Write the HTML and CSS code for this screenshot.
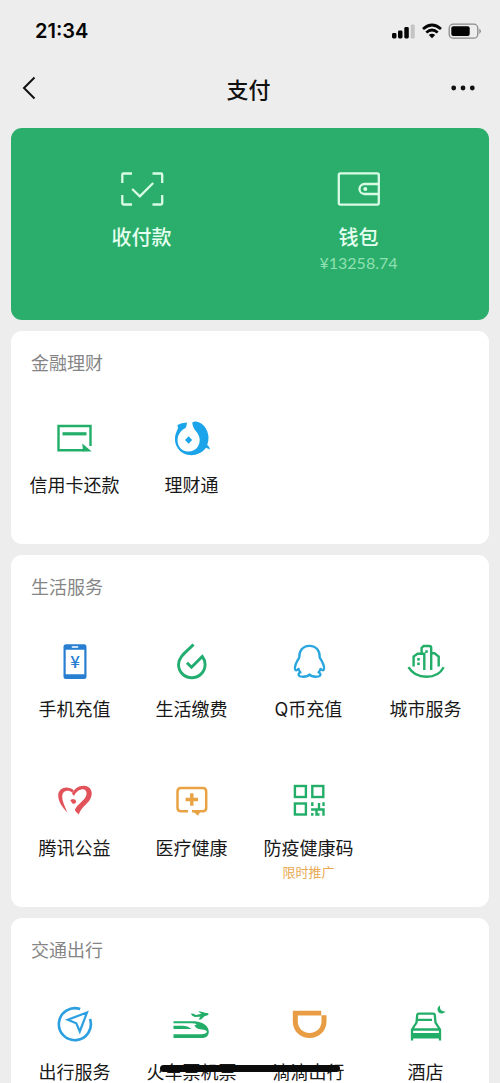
FILE: index.html
```html
<!DOCTYPE html>
<html lang="zh-CN">
<head>
<meta charset="utf-8">
<meta name="viewport" content="width=device-width, initial-scale=1">
<title>支付</title>
<link rel="stylesheet" href="styles.css">
</head>
<body>
<div class="app">
  <div class="status-bar">
    <span class="time">21:34</span>
    <svg class="status-icons" width="90" height="18" viewBox="0 0 90 18">
      <g fill="#050505">
        <rect x="0" y="11" width="4.500" height="5.500" rx="1.400"/>
        <rect x="6" y="8.500" width="4.500" height="8" rx="1.400"/>
        <rect x="12.300" y="5" width="4.500" height="11.500" rx="1.400"/>
      </g>
      <rect x="18.700" y="2.500" width="4" height="14" rx="1.200" fill="#c4c4c4"/>
      <g fill="none" stroke="#050505" stroke-width="2.700">
        <path d="M31 7Q40 -1 49 7"/>
        <path d="M34.300 10.500Q40 5.500 45.700 10.500"/>
      </g>
      <path d="M36.800 13Q40 10.500 43.200 13L40 16.300Z" fill="#050505"/>
      <rect x="57.200" y="2.200" width="28.600" height="14" rx="4" fill="none" stroke="#8b8b8b" stroke-width="1.300"/>
      <rect x="59.300" y="4.300" width="18.400" height="9.800" rx="2" fill="#050505"/>
      <path d="M87.300 6.500Q90.500 9.200 87.300 11.900Z" fill="#8b8b8b"/>
    </svg>
  </div>

  <header class="nav">
    <button class="nav-button" type="button" aria-label="返回">
      <svg width="14" height="24" viewBox="0 0 14 24" fill="none" stroke="#111" stroke-width="2"><path d="M12.500 1.500L2 12L12.500 22.500"/></svg>
    </button>
    <h1 class="nav-title">支付</h1>
    <button class="nav-button nav-more" type="button" aria-label="更多">
      <svg width="24" height="6" viewBox="0 0 24 6" fill="#111"><circle cx="2.700" cy="3" r="2.400"/><circle cx="12" cy="3" r="2.400"/><circle cx="21.300" cy="3" r="2.400"/></svg>
    </button>
  </header>

  <main class="content">
    <section class="wallet-card">
      <a class="wallet-item" href="#pay">
        <svg width="48" height="40" viewBox="0 0 48 40" fill="none" stroke="#d9fbe6" stroke-width="2.300">
          <path d="M14 4.500H5.500Q4.300 4.500 4.300 5.700V14M34.500 4.500H43Q44.200 4.500 44.200 5.700V14M4.300 26V34.300Q4.300 35.500 5.500 35.500H14M44.200 26V34.300Q44.200 35.500 43 35.500H34.500M14.200 20L21.800 27.300L35.200 14"/>
        </svg>
        <span class="wallet-label">收付款</span>
      </a>
      <a class="wallet-item" href="#wallet">
        <svg width="48" height="40" viewBox="0 0 48 40" fill="none" stroke="#d9fbe6" stroke-width="2.300">
          <rect x="3.800" y="4.400" width="40" height="31.200" rx="1.500"/>
          <path d="M43.800 15H29.500A5 5 0 0 0 29.500 25H43.800"/>
          <circle cx="30.300" cy="20" r="2" fill="#d9fbe6" stroke="none"/>
        </svg>
        <span class="wallet-label">钱包</span>
        <span class="amount">¥13258.74</span>
      </a>
    </section>

    <section class="card">
      <h2 class="card-title">金融理财</h2>
      <div class="grid">
        <a class="item" href="#credit">
          <svg class="icon" viewBox="0 0 40 40">
            <path d="M35.500 28V8H3.500V32.300H29" fill="none" stroke="#22ae68" stroke-width="2.400"/>
            <path d="M7.500 15.800H31.500" stroke="#22ae68" stroke-width="3.200"/>
            <path d="M27.300 25.600L36.700 33.500H28Z" fill="#22ae68"/>
          </svg>
          <span>信用卡还款</span>
        </a>
        <a class="item" href="#licaitong">
          <svg class="icon" viewBox="0 0 40 40" fill="#1ba4e9">
            <path d="M5.500 7Q9 5 15 4.600Q14.800 8 13.500 10C6 13.500 3.800 22 7 28.300C10.500 35 21.500 35.500 26 28.500Q29.500 22 26 16C24 12.500 20.500 10.500 20.300 4.500Q22 3.300 24 3.500C31 4.500 36 11.500 36.500 19Q36.700 23 35.200 27Q37.500 28.200 38 31.500L34 29.800C27 39.500 12 39.600 6 30.500C2 25 2.300 18 5 12.500Q6.700 10 5.500 7Z"/>
            <path d="M16.600 18.300L20.200 22L16.600 25.700L13 22Z"/>
          </svg>
          <span>理财通</span>
        </a>
      </div>
    </section>

    <section class="card">
      <h2 class="card-title">生活服务</h2>
      <div class="grid">
        <a class="item" href="#phone">
          <svg class="icon" viewBox="0 0 40 40">
            <path d="M11 2.300H29Q31.500 2.300 31.500 4.800V34.500Q31.500 37 29 37H11Q8.500 37 8.500 34.500V4.800Q8.500 2.300 11 2.300ZM10.700 7.700V32.300H29.300V7.700Z" fill="#287fd2" fill-rule="evenodd"/>
            <path d="M17.300 5H22.700" stroke="#fff" stroke-width="1.400" stroke-linecap="round"/>
            <text class="yen" x="20" y="26" text-anchor="middle">¥</text>
          </svg>
          <span>手机充值</span>
        </a>
        <a class="item" href="#bills">
          <svg class="icon" viewBox="0 0 40 40" fill="none" stroke="#22ae70" stroke-width="2.900">
            <path d="M21.500 2.500C15 9.500 6.500 14.500 6.500 22.500A13.300 13.300 0 0 0 33.100 22.500Q33.100 18 30.300 14.500L19.500 25.300L15 20.700"/>
          </svg>
          <span>生活缴费</span>
        </a>
        <a class="item" href="#qcoin">
          <svg class="icon" viewBox="0 0 40 40" fill="none" stroke="#2aa6df" stroke-width="2.300" stroke-linejoin="round" stroke-linecap="round">
            <path d="M20.500 3.800C13.500 3.800 10 9 10.300 15.500C8 19 5.500 23.200 6 27C6.200 29 7.600 28.800 9.500 26.800Q10 29 11.500 30.300C8.500 31.700 9 34.500 13 34.700C16 34.900 19 34.500 20.500 32.500C22 34.500 25 34.900 28 34.700C32 34.500 32.500 31.700 29.500 30.300Q31 29 31.500 26.800C33.400 28.800 34.800 29 35 27C35.500 23.200 33 19 30.700 15.500C31 9 27.500 3.800 20.500 3.800Z"/>
          </svg>
          <span>Q币充值</span>
        </a>
        <a class="item" href="#city">
          <svg class="icon" viewBox="0 0 40 40" fill="none" stroke="#22ae68" stroke-width="2.400">
            <path d="M7.600 24.500V14.500L11.500 11.700H18.300V28M15.600 11.700V6L17.600 4H23.200Q25.200 4 25.200 6V28M25.200 11.200H28.500L32.700 14.500V24.500M2.500 25.200C10 38 31 38 37.700 25.200"/>
            <g fill="#22ae68" stroke="none"><rect x="11.200" y="16" width="2.600" height="2.600"/><rect x="11.200" y="20.500" width="2.600" height="2.600"/><rect x="19.200" y="8.300" width="2.600" height="2.600"/></g>
          </svg>
          <span>城市服务</span>
        </a>
        <a class="item" href="#charity">
          <svg class="icon" viewBox="0 0 40 40" fill="#e2525a">
            <path d="M12.500 31.800C7 26 3.200 20.500 3.200 14.300C3.400 6.500 12.500 3.800 18.800 9.300L17.300 11.800C13 8 7.200 10 7.200 15.500C7.300 20.500 10 25.500 12.500 31.800Z"/>
            <path d="M17 12.500C19.500 7.500 24 4.800 28.500 4.800C36 4.800 39 12 35 18.500C31.800 23.800 26 26.500 23.800 33.500Q21 31.500 19.800 29C22 24 27 21 30 17C33 12.500 31.500 8 27.500 8.200C23.500 8.500 20.500 11.500 19 15Z"/>
            <path d="M15.300 19.500Q17 17.800 18.800 18.200A2.300 2.300 0 1 1 16.600 21.300Z"/>
          </svg>
          <span>腾讯公益</span>
        </a>
        <a class="item" href="#medical">
          <svg class="icon" viewBox="0 0 40 40">
            <path d="M16 30.300H9Q5.500 30.300 5.500 26.800V10.500Q5.500 7 9 7H30.700Q34.200 7 34.200 10.500V26.800Q34.200 30.300 30.700 30.300H20" fill="none" stroke="#e9a344" stroke-width="2.500"/>
            <path d="M19.800 12.300V24.700M13.600 18.500H26" stroke="#e9a344" stroke-width="3.400"/>
            <path d="M19.800 29.500H29L26 34.800Z" fill="#e9a344"/>
          </svg>
          <span>医疗健康</span>
        </a>
        <a class="item" href="#health-code">
          <svg class="icon" viewBox="0 0 40 40" fill="none" stroke="#22ae68" stroke-width="2.400">
            <rect x="5.900" y="5" width="11" height="11"/>
            <rect x="23.300" y="5" width="11" height="11"/>
            <rect x="5.900" y="22.500" width="11" height="11"/>
            <path d="M23.300 21.300V25M22.100 28.500H35.700M34.500 21.300V25M30 22V28.500M23.300 32V34.700M27.500 28.500V33.500H30.500M34.500 28.500V34.700"/>
          </svg>
          <span>防疫健康码</span>
          <small class="note">限时推广</small>
        </a>
      </div>
    </section>

    <section class="card">
      <h2 class="card-title">交通出行</h2>
      <div class="grid">
        <a class="item" href="#travel">
          <svg class="icon" viewBox="0 0 40 40" fill="none" stroke="#2b9fe0" stroke-width="2.600">
            <path d="M25.200 4.100A16 16 0 1 0 35 14"/>
            <path d="M32 7.500L12.800 14.700L21.300 18.300L24.800 26.500Z" stroke-width="2.200"/>
          </svg>
          <span>出行服务</span>
        </a>
        <a class="item" href="#tickets">
          <svg class="icon" viewBox="0 0 40 40" fill="#22ae68">
            <path d="M1.500 16.200H22C30 16.500 36.800 20.500 36.800 26.500C36.800 31 34 33 30 33H1.500V29.300H29Q34.500 29.300 34.900 26.500Q34 24.800 30 24.500C25.500 24.300 23 22.500 22.500 20.200L25 19.200Q23 18.300 20 18.200H1.500Z"/>
            <path d="M1.500 20.700H10Q16 20.800 19.500 24H1.500Z"/>
            <path d="M18.700 8.800L21 8.500L24 10L29.500 8.700L26 6.600H28.500L34 8Q37 7.600 36.500 9.500Q35.500 10.800 32.500 11.300L29 14.500H26.500L28.500 11.800L23 12Q20 11.500 18.700 8.800Z"/>
          </svg>
          <span>火车票机票</span>
        </a>
        <a class="item" href="#didi">
          <svg class="icon" viewBox="0 0 40 40" fill="#e89d45">
            <path d="M4.500 5.700H32.200V10.200H37.500V16.500C37.500 26 30 33 20.600 33C11 33 3.800 26 3.800 16.500V6.400Q3.800 5.700 4.500 5.700ZM8.800 10.500V16.500C8.800 23 14 28 20.600 28C27.300 28 32.500 23 32.500 16.500V10.500Z" fill-rule="evenodd"/>
          </svg>
          <span>滴滴出行</span>
        </a>
        <a class="item" href="#hotel">
          <svg class="icon" viewBox="0 0 40 40">
            <path d="M6 35.500V24.500L10.500 17.500L11.200 10Q11.400 8.700 12.700 8.700H27.300Q28.600 8.700 28.800 10L29.500 17.500L34 24.500V35.500M6 24.500H34M11 14.800H26" fill="none" stroke="#22ae68" stroke-width="2.300"/>
            <path d="M5 28H35V33.500H5Z" fill="#22ae68"/>
            <path d="M34.300 0.300C29.500 2.700 31.500 9 36 8.500Q38.800 8.200 39.500 6.300C35.500 7 33 3.800 34.300 0.300Z" fill="#22ae68"/>
          </svg>
          <span>酒店</span>
        </a>
      </div>
    </section>
  </main>
  <div class="home-indicator"></div>
</div>
</body>
</html>
```
FILE: styles.css
```css
* {
  box-sizing: border-box;
}

body {
  margin: 0;
  background: #ededed;
  color: #181818;
  font-family: "Noto Sans CJK SC", sans-serif;
}

a {
  color: inherit;
  text-decoration: none;
}

.app {
  position: relative;
  height: 100vh;
  overflow: hidden;
}

.status-bar {
  display: flex;
  align-items: center;
  justify-content: space-between;
  height: 62px;
  padding: 0 18px 0 35px;
}

.time {
  font: 600 20px/24px Inter, sans-serif;
  color: #050505;
}

.nav {
  display: flex;
  align-items: center;
  justify-content: space-between;
  height: 52px;
  padding: 0 25px 0 22px;
}

.nav-button {
  display: flex;
  align-items: center;
  width: 44px;
  height: 44px;
  padding: 0;
  border: 0;
  background: none;
}

.nav-more {
  justify-content: flex-end;
}

.nav-title {
  margin: 0;
  font-size: 22px;
  font-weight: 500;
  line-height: 30px;
  color: #111;
}

.content {
  display: flex;
  flex-direction: column;
  gap: 11px;
  padding: 14px 11px 0;
}

.wallet-card {
  display: grid;
  grid-template-columns: 1fr 1fr;
  min-height: 192px;
  padding: 41px 22px;
  border-radius: 11px;
  background: #2bae6b;
}

.wallet-item {
  display: flex;
  flex-direction: column;
  align-items: center;
}

.wallet-label {
  margin-top: 14px;
  font-size: 20px;
  font-weight: 500;
  line-height: 28px;
  color: #e6fff0;
}

.amount {
  margin-top: 2px;
  font: 400 16px/20px Lato, sans-serif;
  color: #8fe0b2;
}

.card {
  padding: 20px 5px 0;
  border-radius: 11px;
  background: #fff;
}

.card-title {
  margin: 0 0 45px 15px;
  font-size: 18px;
  font-weight: 400;
  line-height: 22px;
  color: #858585;
}

.grid {
  display: grid;
  grid-template-columns: repeat(4, 1fr);
  row-gap: 13px;
}

.item {
  display: flex;
  flex-direction: column;
  align-items: center;
  gap: 18px;
  min-height: 126px;
  font-family: Inter, "Noto Sans CJK SC", sans-serif;
  font-size: 18px;
  line-height: 20px;
  white-space: nowrap;
}

.icon {
  width: 40px;
  height: 40px;
}

.yen {
  fill: #287fd2;
  font: 500 17px "Noto Sans CJK SC", sans-serif;
}

.note {
  margin-top: -15px;
  font-size: 13px;
  font-weight: 400;
  line-height: 20px;
  color: #e8a951;
}

.home-indicator {
  position: absolute;
  bottom: 11px;
  left: 50%;
  width: 180px;
  height: 7px;
  border-radius: 4px;
  background: #0b0b0b;
  transform: translateX(-50%);
}
```
